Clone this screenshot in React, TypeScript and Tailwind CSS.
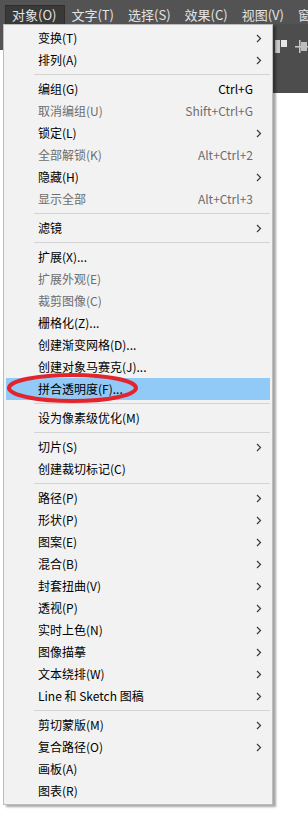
import React from 'react';

type Entry =
    | { sep: true }
    | { label: string; shortcut?: string; sub?: boolean; disabled?: boolean; active?: boolean };

const items: Entry[] = [
    { label: '变换(T)', sub: true },
    { label: '排列(A)', sub: true },
    { sep: true },
    { label: '编组(G)', shortcut: 'Ctrl+G' },
    { label: '取消编组(U)', shortcut: 'Shift+Ctrl+G', disabled: true },
    { label: '锁定(L)', sub: true },
    { label: '全部解锁(K)', shortcut: 'Alt+Ctrl+2', disabled: true },
    { label: '隐藏(H)', sub: true },
    { label: '显示全部', shortcut: 'Alt+Ctrl+3', disabled: true },
    { sep: true },
    { label: '滤镜', sub: true },
    { sep: true },
    { label: '扩展(X)...' },
    { label: '扩展外观(E)', disabled: true },
    { label: '裁剪图像(C)', disabled: true },
    { label: '栅格化(Z)...' },
    { label: '创建渐变网格(D)...' },
    { label: '创建对象马赛克(J)...' },
    { label: '拼合透明度(F)...', active: true },
    { sep: true },
    { label: '设为像素级优化(M)' },
    { sep: true },
    { label: '切片(S)', sub: true },
    { label: '创建裁切标记(C)' },
    { sep: true },
    { label: '路径(P)', sub: true },
    { label: '形状(P)', sub: true },
    { label: '图案(E)', sub: true },
    { label: '混合(B)', sub: true },
    { label: '封套扭曲(V)', sub: true },
    { label: '透视(P)', sub: true },
    { label: '实时上色(N)', sub: true },
    { label: '图像描摹', sub: true },
    { label: '文本绕排(W)', sub: true },
    { label: 'Line 和 Sketch 图稿', sub: true },
    { sep: true },
    { label: '剪切蒙版(M)', sub: true },
    { label: '复合路径(O)', sub: true },
    { label: '画板(A)' },
    { label: '图表(R)' },
];

const topMenus = ['对象(O)', '文字(T)', '选择(S)', '效果(C)', '视图(V)', '窗'];

const Chevron = () => (
    <svg width="6" height="9" viewBox="0 0 6 9" className="ml-auto mr-[8px]">
        <polyline points="1,1 4.5,4.5 1,8" fill="none" stroke="#3a3a3a" strokeWidth="1.2" />
    </svg>
);

const App: React.FC = () => {
    return (
        <div
            className="relative w-[308px] h-[823px] bg-white overflow-hidden"
            style={{ fontFamily: '"Noto Sans CJK SC", "Noto Sans", sans-serif' }}
        >
            {/* Menu bar */}
            <div className="flex h-[24px] bg-[#535353] pl-[5px] pt-[5px] whitespace-nowrap">
                {topMenus.map((m, i) => (
                    <div
                        key={m}
                        className={`h-[19px] pl-[6px] pr-[8px] flex items-center text-[13px] text-[#e4e4e4] ${
                            i === 0 ? 'bg-[#393939] border border-b-0 border-[#2e2e2e]' : ''
                        }`}
                    >
                        {m}
                    </div>
                ))}
            </div>

            {/* Control bar behind menu */}
            <div className="flex h-[69px]">
                <div className="w-[3px] h-[26px] bg-[#535353]" />
                <div className="flex-1" />
                <div className="w-[35px] bg-[#4d4d4d] flex items-start pt-[16px]">
                    <svg width="35" height="14" viewBox="0 0 35 14">
                        <rect x="2" y="0" width="5" height="13" fill="#c8c8c8" />
                        <rect x="8" y="0" width="6" height="7" fill="#e6e6e6" />
                        <rect x="26" y="0" width="1.5" height="13" fill="#c8c8c8" />
                        <rect x="22" y="6" width="13" height="1.5" fill="#c8c8c8" />
                        <rect x="28" y="2" width="6" height="9" fill="#bdbdbd" />
                    </svg>
                </div>
            </div>

            {/* Dropdown menu */}
            <div className="absolute left-[3px] top-[24px] w-[270px] bg-[#f2f2f2] border border-[#bdbdbd] py-[2px] px-[2px] shadow-[3px_2px_2px_rgba(0,0,0,0.35)] text-[12px]">
                {items.map((it, i) =>
                    'sep' in it ? (
                        <div key={i} className="h-[7px] flex items-center">
                            <div className="ml-[28px] flex-1 h-px bg-[#d4d4d4]" />
                        </div>
                    ) : (
                        <div
                            key={i}
                            className={`h-[22px] flex items-center pl-[32px] whitespace-nowrap ${
                                it.active ? 'bg-[#91c9f7]' : ''
                            } ${it.disabled ? 'text-[#6d6d6d]' : 'text-black'}`}
                        >
                            <span>{it.label}</span>
                            {it.shortcut && <span className="ml-auto mr-[17px]">{it.shortcut}</span>}
                            {it.sub && <Chevron />}
                        </div>
                    )
                )}
            </div>

            {/* Red annotation ring */}
            <svg className="absolute left-0 top-[370px]" width="150" height="40" viewBox="0 0 150 40">
                <ellipse cx="72.5" cy="18" rx="63.5" ry="13" fill="none" stroke="#e2242c" strokeWidth="4" />
            </svg>
        </div>
    );
};

export default App;
